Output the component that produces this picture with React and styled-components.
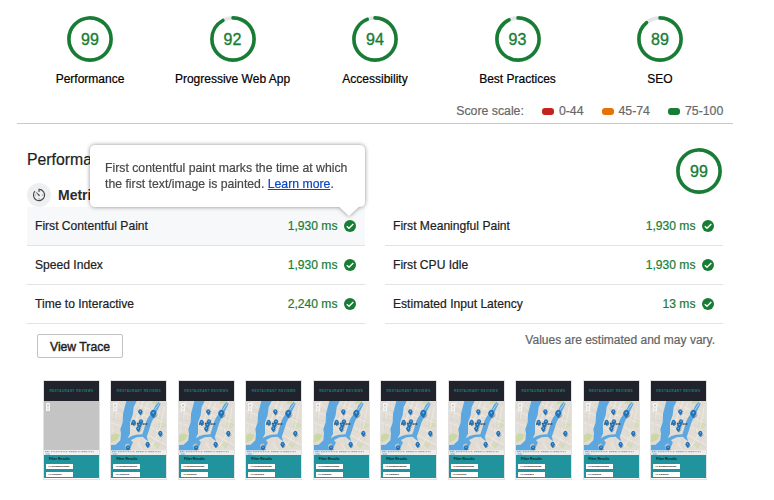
import React from "react";
import styled, { createGlobalStyle } from "styled-components";

const GREEN = "#187d34";

const GlobalStyle = createGlobalStyle`
  * { box-sizing: border-box; }
  body {
    margin: 0;
    background: #fff;
    color: #212121;
    font-family: "Liberation Sans", Arial, sans-serif;
    font-size: 12.1px;
    line-height: 16px;
    -webkit-text-stroke: 0.2px currentColor;
  }
`;

const Page = styled.main`
  width: 774px;
  height: 500px;
  overflow: hidden;
  padding-left: 17px;
`;

const Header = styled.header`
  width: 716px;
  height: 124px;
  border-bottom: 1px solid #c9c9c9;
  padding: 16px 1.75px 0;
`;

const Scores = styled.div`
  display: grid;
  grid-template-columns: repeat(5, 1fr);
`;

const ScoreItem = styled.div`
  display: flex;
  flex-direction: column;
  align-items: center;
  gap: 9px;
  color: #000;
  font-size: 12px;
  white-space: nowrap;
`;

const GaugeBox = styled.div`
  display: grid;
  width: 46px;
  height: 46px;
  flex: none;
  > * { grid-area: 1 / 1; }
`;

const GaugeValue = styled.span`
  place-self: center;
  color: ${GREEN};
  font-size: 16px;
  line-height: 18px;
  padding-top: 1px;
  -webkit-text-stroke: 0.35px ${GREEN};
`;

const Scale = styled.div`
  display: flex;
  justify-content: flex-end;
  align-items: center;
  gap: 18px;
  margin-top: 16px;
  padding-right: 8px;
  color: #686868;
  font-size: 12.3px;
`;

const ScaleItem = styled.span`
  display: flex;
  align-items: center;
  gap: 5px;
  &::before {
    content: "";
    width: 12px;
    height: 7px;
    margin-top: 1px;
    border-radius: 3px;
    background: ${(p) => p.$color};
  }
`;

const Section = styled.section`
  width: 696px;
  margin: 24px 0 0 10px;
`;

const SectionHead = styled.div`
  display: flex;
  justify-content: space-between;
  height: 35px;
  padding-right: 1px;
`;

const Title = styled.h2`
  margin: 2px 0 0;
  font-size: 15.8px;
  font-weight: 400;
  line-height: 20px;
`;

const MetricsHead = styled.div`
  display: flex;
  align-items: center;
  gap: 7px;
  height: 24px;
  padding-bottom: 1px;
  color: #2b2b2b;
  font-size: 14px;
  font-weight: 700;
  -webkit-text-stroke: 0;
`;

const IconDisc = styled.span`
  display: grid;
  place-items: center;
  width: 24px;
  height: 24px;
  border-radius: 50%;
  background: #eeeff1;
`;

const Columns = styled.div`
  display: grid;
  grid-template-columns: 338px 338px;
  column-gap: 20px;
`;

const Row = styled.div`
  position: relative;
  display: flex;
  align-items: center;
  height: 39px;
  padding: 0 9px 0 8px;
  border-bottom: 1px solid #e3e3e3;
  background: ${(p) => (p.$active ? "#f7f8fa" : "#fff")};
`;

const RowValue = styled.span`
  margin-left: auto;
  margin-right: 6.5px;
  color: ${GREEN};
`;

const Tooltip = styled.div`
  position: absolute;
  z-index: 2;
  right: 0;
  bottom: 38px;
  width: 275px;
  height: 62px;
  padding: 15px;
  border-radius: 5px;
  background: #fff;
  color: #484848;
  font-size: 12.25px;
  filter: drop-shadow(0 0 2px rgba(0, 0, 0, 0.45));
  white-space: nowrap;
  &::after {
    content: "";
    position: absolute;
    top: 61px;
    right: 5px;
    border: 11px solid transparent;
    border-top: 10px solid #fff;
    border-bottom: 0;
  }
`;

const Link = styled.a`
  color: #0a46c8;
  text-decoration: underline;
`;

const Footer = styled.div`
  display: flex;
  justify-content: space-between;
  align-items: flex-start;
  padding: 10px 8px 0 10px;
`;

const TraceButton = styled.button`
  width: 86px;
  height: 24px;
  padding: 1px 0 0;
  border: 1px solid #c3c3c3;
  border-radius: 2px;
  background: #fff;
  color: #212121;
  font: 12.2px "Liberation Sans", Arial, sans-serif;
  -webkit-text-stroke: 0.4px #212121;
`;

const Note = styled.span`
  margin-top: -2px;
  color: #646464;
  font-size: 12px;
`;

const Filmstrip = styled.div`
  display: flex;
  justify-content: space-between;
  width: 664px;
  margin: 22px 0 0 26px;
  -webkit-text-stroke: 0;
`;

const Frame = styled.div`
  display: flex;
  flex-direction: column;
  width: 57px;
  height: 99.5px;
  border: 1px solid #e2e2e2;
  border-bottom-width: 1.5px;
  background: #fff;
`;

const FrameHead = styled.div`
  display: grid;
  place-items: center;
  height: 20px;
  background: #20232b;
  color: #1e7c81;
  font: 700 3.2px "Liberation Sans", Arial, sans-serif;
  letter-spacing: 0.38px;
  white-space: nowrap;
`;

const FrameFoot = styled.div`
  display: flex;
  flex-direction: column;
  align-items: flex-start;
  gap: 3px;
  height: 23px;
  padding: 2px 2px 0;
  background: #21939d;
`;

const FrameTitle = styled.span`
  padding-left: 3px;
  color: #06272b;
  font-size: 3.3px;
  font-weight: 700;
  line-height: 4px;
`;

const FrameField = styled.span`
  width: 27px;
  height: 5px;
  flex: none;
  padding-left: 2px;
  background: #fff;
  color: #000;
  font-size: 2.4px;
  font-weight: 700;
  line-height: 5px;
  white-space: nowrap;
`;

function Gauge({ value }) {
  return (
    <GaugeBox>
      <svg width="46" height="46" viewBox="0 0 46 46" fill="none" strokeWidth="3.6">
        <circle cx="23" cy="23" r="21.1" stroke="#e3e5e8" />
        <circle
          cx="23"
          cy="23"
          r="21.1"
          stroke={GREEN}
          strokeLinecap="round"
          pathLength="100"
          strokeDasharray={`${value} 100`}
          transform="rotate(-90 23 23)"
        />
      </svg>
      <GaugeValue>{value}</GaugeValue>
    </GaugeBox>
  );
}

function Check() {
  return (
    <svg width="12" height="12" viewBox="0 0 12 12">
      <circle cx="6" cy="6" r="6" fill={GREEN} />
      <path d="M2.8 6.2 5 8.3 9.3 4" fill="none" stroke="#fff" strokeWidth="1.4" />
    </svg>
  );
}

function TimerIcon() {
  return (
    <svg width="14" height="14" viewBox="0 0 14 14" fill="none" stroke="#4a4a4a" strokeWidth="1.1">
      <path d="M7 4.1V1.4A5.6 5.6 0 1 1 2.9 3.2" />
      <path d="M3.9 3.9 7.7 7.1A.8.8 0 0 1 6.8 8Z" fill="#4a4a4a" strokeWidth=".3" />
      <path d="M10.4 7h.9M7 10.5v.8M2.7 7h.9" strokeWidth=".9" />
    </svg>
  );
}

const PINS = [
  [88, 33, 1.1], [127, 38, 1.5], [68, 65, 1.1], [90, 63, 1.1], [85, 73, 1.1],
  [82, 84, 1.1], [148, 98, 1.1], [110, 131, 1.1], [51, 141, 1.1],
];

function MapView({ empty }) {
  return (
    <svg width="55" height="54" viewBox="0 0 165 162" preserveAspectRatio="none">
      {empty ? (
        <path d="M0 0h165v148H0z" fill="#c3c4c3" />
      ) : (
        <g>
          <path d="M0 0h165v162H0z" fill="#e2ddd4" />
          <path d="M0 103 12 97 27 102 18 117 0 125ZM126 0h20l-6 8h-19Z" fill="#cdd7a4" />
          <path d="M140 69 165 58v19l-17 8ZM123 133l14-9 11 12-15 8Z" fill="#d5dcba" />
          <g fill="none" stroke="#efebe4" strokeWidth="2.5">
            <path d="M0 30 40 45M0 65 31 76M11 0 36 22M22 0 5 92M80 11l37 15M72 32l39 15M65 51l41 16M55 78l36 14M96 0 68 77M110 7 78 91M137 54l28 12M120 79l45 23M112 103l53 29M145 30l-10 63M160 16l-15 77M100 110l42 39M154 82l-36 57M74 118l28 38" />
          </g>
          <g fill="none" stroke="#d1cbc5" strokeWidth="1.3">
            <path d="M0 17 38 32M0 53 32 61M13 0 9 88M90 0 69 56M103 0 77 80M74 22l34 13M64 60l39 17M136 48l29 16M129 71l36 21M108 109l57 31M147 42l-16 53M158 98l-23 52M90 108l11 46" />
          </g>
          <path d="M46 0h31L68 18 65 42 57 65 57 98 50 112 62 105 75 101 94 100 98 88 106 61 111 50 126 29 134 12 143 3 149 8 131 44 121 65 113 91 107 108 112 121 103 115 95 107 77 109 60 117 68 128 60 146 45 150 18 162H0V132L14 131 28 118 30 98 28 85 35 64 36 39Z" fill="#5ca7df" />
          <path d="M123 39 145 7" fill="none" stroke="#d7e7ed" strokeWidth="2" />
          <path d="M65 126 76 116 82 124 69 148 54 150Z" fill="#e2d9d2" />
          <path d="M42 132 52 127 56 139 44 143Z" fill="#c8c9c1" />
          <path d="M60 69h15M78 67h15M95 69h14" fill="none" stroke="#46464a" strokeWidth="4" strokeDasharray="4 1" />
          {PINS.map(([x, y, size]) => (
            <g key={`${x}-${y}`} transform={`translate(${x} ${y}) scale(${size})`}>
              <path d="m1 9 7-6" stroke="#8a8884" strokeWidth="2" />
              <path d="M0 9-4 4a6 6.5 0 1 1 8 0Z" fill="#2272b5" />
              <circle cy="-2" r="1.8" fill="#7fbce8" />
            </g>
          ))}
        </g>
      )}
      <rect x="6" y="6" width="12" height="24" rx="2" fill="#f7f7f7" />
      <path d="M9 13h6M12 10v6M9 24h6" stroke="#777" strokeWidth="1" />
      <path d="M6 18.5h12" stroke="#ccc" />
      <path d="M0 148h165v14H0z" fill="#eef0ee" fillOpacity=".9" />
      <path d="M3 152h13M75 152h24M112 152h17M5 159h13" stroke="#69a8d4" strokeWidth="3" strokeDasharray="5 1" />
      <path d="M21 152h51M101 152h9M131 152h20" stroke="#858b8d" strokeWidth="2.5" strokeDasharray="3 2" />
    </svg>
  );
}

const SCORES = [
  ["Performance", 99],
  ["Progressive Web App", 92],
  ["Accessibility", 94],
  ["Best Practices", 93],
  ["SEO", 89],
];

const METRICS = [
  ["First Contentful Paint", "1,930 ms"],
  ["First Meaningful Paint", "1,930 ms"],
  ["Speed Index", "1,930 ms"],
  ["First CPU Idle", "1,930 ms"],
  ["Time to Interactive", "2,240 ms"],
  ["Estimated Input Latency", "13 ms"],
];

export default function App() {
  return (
    <Page>
      <GlobalStyle />
      <Header>
        <Scores>
          {SCORES.map(([label, value]) => (
            <ScoreItem key={label}>
              <Gauge value={value} />
              {label}
            </ScoreItem>
          ))}
        </Scores>
        <Scale>
          <span>Score scale:</span>
          <ScaleItem $color="#c5221f">0-44</ScaleItem>
          <ScaleItem $color="#e67300">45-74</ScaleItem>
          <ScaleItem $color={GREEN}>75-100</ScaleItem>
        </Scale>
      </Header>

      <Section>
        <SectionHead>
          <Title>Performance</Title>
          <Gauge value={99} />
        </SectionHead>
        <MetricsHead>
          <IconDisc><TimerIcon /></IconDisc>
          Metrics
        </MetricsHead>
        <Columns>
          {METRICS.map(([name, value], i) => (
            <Row key={name} $active={i === 0}>
              {name}
              <RowValue>{value}</RowValue>
              <Check />
              {i === 0 && (
                <Tooltip>
                  First contentful paint marks the time at which
                  <br />
                  the first text/image is painted. <Link>Learn more</Link>.
                </Tooltip>
              )}
            </Row>
          ))}
        </Columns>
        <Footer>
          <TraceButton>View Trace</TraceButton>
          <Note>Values are estimated and may vary.</Note>
        </Footer>
      </Section>

      <Filmstrip>
        {Array.from({ length: 10 }, (_, i) => (
          <Frame key={i}>
            <FrameHead>RESTAURANT REVIEWS</FrameHead>
            <MapView empty={i === 0} />
            <FrameFoot>
              <FrameTitle>Filter Results</FrameTitle>
              <FrameField>All Neighborhoods</FrameField>
              <FrameField>All Cuisines</FrameField>
            </FrameFoot>
          </Frame>
        ))}
      </Filmstrip>
    </Page>
  );
}
